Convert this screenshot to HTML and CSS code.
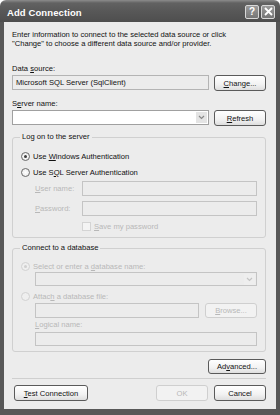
FILE: index.html
```html
<!DOCTYPE html>
<html lang="en">
<head>
  <meta charset="UTF-8">
  <title>Add Connection</title>
  <link rel="stylesheet" href="styles.css">
</head>
<body>

  <div class="window">
    <div class="titlebar">
      <span class="title">Add Connection</span>
      <div class="caption-buttons">
        <span class="caption-btn">?</span>
        <span class="caption-btn">
          <svg width="9" height="9" viewBox="0 0 9 9"><path d="M1 1 L8 8 M8 1 L1 8" stroke="#fff" stroke-width="1.8"/></svg>
        </span>
      </div>
    </div>

    <div class="frame">
      <p class="intro">Enter information to connect to the selected data source or click "Change" to choose a different data source and/or provider.</p>

      <div class="label label-first">Data <u>s</u>ource:</div>
      <div class="row">
        <div class="field readonly">Microsoft SQL Server (SqlClient)</div>
        <button class="btn"><u>C</u>hange...</button>
      </div>

      <div class="label">S<u>e</u>rver name:</div>
      <div class="row">
        <div class="field combo">
          <span class="combo-value"></span>
          <span class="combo-arrow">
            <svg width="7" height="5" viewBox="0 0 7 5"><path d="M1 1 L3.5 3.5 L6 1" stroke="#888" stroke-width="1.2" fill="none"/></svg>
          </span>
        </div>
        <button class="btn"><u>R</u>efresh</button>
      </div>

      <fieldset class="group group-logon">
        <legend>Log on to the server</legend>
        <div class="option">
          <span class="radio checked"></span>
          <span>Use <u>W</u>indows Authentication</span>
        </div>
        <div class="option">
          <span class="radio"></span>
          <span>Use S<u>Q</u>L Server Authentication</span>
        </div>
        <div class="cred-row">
          <span class="cred-label disabled"><u>U</u>ser name:</span>
          <div class="field disabled-field"></div>
        </div>
        <div class="cred-row">
          <span class="cred-label disabled"><u>P</u>assword:</span>
          <div class="field disabled-field"></div>
        </div>
        <div class="check-row disabled">
          <span class="checkbox"></span>
          <span><u>S</u>ave my password</span>
        </div>
      </fieldset>

      <fieldset class="group group-db">
        <legend>Connect to a database</legend>
        <div class="option disabled">
          <span class="radio checked off"></span>
          <span>Select or enter a <u>d</u>atabase name:</span>
        </div>
        <div class="indent">
          <div class="field disabled-field combo small">
            <span class="combo-value"></span>
            <span class="combo-arrow off">
              <svg width="7" height="5" viewBox="0 0 7 5"><path d="M1 1 L3.5 3.5 L6 1" stroke="#c4c4c4" stroke-width="1.2" fill="none"/></svg>
            </span>
          </div>
        </div>
        <div class="option disabled">
          <span class="radio off"></span>
          <span>Attac<u>h</u> a database file:</span>
        </div>
        <div class="indent file-row">
          <div class="field disabled-field"></div>
          <button class="btn btn-off"><u>B</u>rowse...</button>
        </div>
        <div class="indent sublabel disabled"><u>L</u>ogical name:</div>
        <div class="indent">
          <div class="field disabled-field small"></div>
        </div>
      </fieldset>

      <div class="advanced-row">
        <button class="btn btn-advanced">Ad<u>v</u>anced...</button>
      </div>

      <div class="footer">
        <button class="btn btn-test"><u>T</u>est Connection</button>
        <div class="footer-right">
          <button class="btn btn-off">OK</button>
          <button class="btn">Cancel</button>
        </div>
      </div>
    </div>
  </div>

</body>
</html>
```

FILE: styles.css
```css
body {
  margin: 0;
  font-family: 'Liberation Sans', Arial, sans-serif;
  font-size: 7.6px;
  color: #111;
  background: #fff;
}

.window {
  width: 280px;
  height: 415px;
  display: flex;
  flex-direction: column;
}

/* title bar */
.titlebar {
  height: 22px;
  flex: none;
  display: flex;
  align-items: center;
  justify-content: space-between;
  padding: 0 5px 0 7px;
  border-radius: 6px 6px 0 0;
  background: linear-gradient(#8c8c8c 0, #626262 3px, #585858 50%, #4e4e4e 100%);
}

.title {
  color: #fff;
  font-weight: bold;
  font-size: 9.5px;
  padding-top: 3px;
  letter-spacing: 0.1px;
}

.caption-buttons {
  display: flex;
  gap: 2px;
  padding-top: 1px;
}

.caption-btn {
  width: 14px;
  height: 14px;
  box-sizing: border-box;
  border: 1px solid #d8d8d8;
  border-radius: 2px;
  background: linear-gradient(#9a9a9a, #767676);
  color: #fff;
  font-weight: bold;
  font-size: 10px;
  display: flex;
  align-items: center;
  justify-content: center;
}

/* window body */
.frame {
  flex: 1;
  background: #ececec;
  border: solid #585858;
  border-width: 0 4px 6px 4px;
  padding: 8px 10px 0 8px;
  display: flex;
  flex-direction: column;
}

.intro {
  margin: 0;
  line-height: 9px;
  max-width: 226px;
}

.label {
  height: 10px;
  line-height: 10px;
  margin-bottom: 1px;
}

.label-first {
  margin-top: 16px;
}

.label + .row + .label {
  margin-top: 8px;
}

.row {
  display: flex;
  gap: 5px;
  height: 16px;
}

.field {
  box-sizing: border-box;
  height: 15px;
  border: 1px solid #a0a0a0;
  background: #fff;
  flex: 1;
  padding: 0 3px;
  line-height: 13px;
}

.readonly {
  background: #ececec;
  border-color: #b4b4b4;
}

.combo {
  display: flex;
  padding: 0 1px 0 3px;
}

.combo-value {
  flex: 1;
}

.combo-arrow {
  width: 11px;
  height: 11px;
  margin-top: 1px;
  background: #e4e4e4;
  display: flex;
  align-items: center;
  justify-content: center;
}

.combo-arrow.off {
  background: #eeeeee;
}

.btn {
  font-family: inherit;
  font-size: 7.6px;
  color: #111;
  width: 52px;
  height: 16px;
  padding: 0;
  border: 1px solid #5a5a5a;
  border-radius: 3px;
  background: linear-gradient(#ffffff, #f2f2f2 60%, #dedede);
  flex: none;
}

.btn-off {
  color: #b8b8b8;
  border-color: #cfcfcf;
  background: #f2f2f2;
}

/* group boxes */
.group {
  margin: 6px 0 0 0;
  padding: 0 8px 6px 8px;
  border: 1px solid #d0d0d0;
  border-radius: 3px;
  min-width: 0;
}

.group legend {
  padding: 0 2px;
  margin-left: -1px;
  line-height: 10px;
}

.group-db {
  margin-top: 5px;
  padding-bottom: 5px;
}

.option {
  display: flex;
  align-items: center;
  gap: 3px;
  height: 12px;
  margin-top: 4px;
}

.group-logon .option:first-of-type {
  margin-top: 8px;
}

.radio {
  width: 9px;
  height: 9px;
  box-sizing: border-box;
  border: 1px solid #6a6a6a;
  border-radius: 50%;
  background: radial-gradient(circle, #ffffff, #e6e6e6);
  display: flex;
  align-items: center;
  justify-content: center;
}

.radio.checked::after {
  content: "";
  width: 3px;
  height: 3px;
  border-radius: 50%;
  background: #3c3c3c;
}

.radio.off {
  border-color: #d2d2d2;
  background: #efefef;
}

.radio.off.checked::after {
  background: #cfcfcf;
}

.disabled {
  color: #b8b8b8;
}

.disabled-field {
  background: #ececec;
  border-color: #c4c4c4;
}

.cred-row {
  display: flex;
  align-items: center;
  margin-top: 3px;
  padding-left: 14px;
}

.cred-row + .cred-row {
  margin-top: 5px;
}

.cred-label {
  width: 47px;
}

.check-row {
  display: flex;
  align-items: center;
  gap: 3px;
  margin-top: 5px;
  padding-left: 61px;
  height: 10px;
}

.checkbox {
  width: 9px;
  height: 9px;
  box-sizing: border-box;
  border: 1px solid #d4d4d4;
  background: #f4f4f4;
}

.indent {
  padding-left: 14px;
  display: flex;
}

.group-db .option:first-of-type {
  margin-top: 7px;
}

.small {
  height: 14px;
}

.group-db .indent:nth-of-type(1) {
  margin-top: 1px;
}

.file-row {
  gap: 6px;
  margin-top: 1px;
}

.file-row .btn {
  height: 15px;
}

.sublabel {
  height: 10px;
  line-height: 10px;
  margin-top: 2px;
  margin-bottom: 2px;
}

.advanced-row {
  display: flex;
  justify-content: flex-end;
  margin-top: 7px;
}

.btn-advanced {
  width: 58px;
  height: 15px;
}

.footer {
  margin-top: 4px;
  padding-top: 6px;
  border-top: 1px solid #cfcfcf;
  display: flex;
  justify-content: space-between;
}

.btn-test {
  width: 74px;
  margin-left: 2px;
}

.footer-right {
  display: flex;
  gap: 6px;
}
```
